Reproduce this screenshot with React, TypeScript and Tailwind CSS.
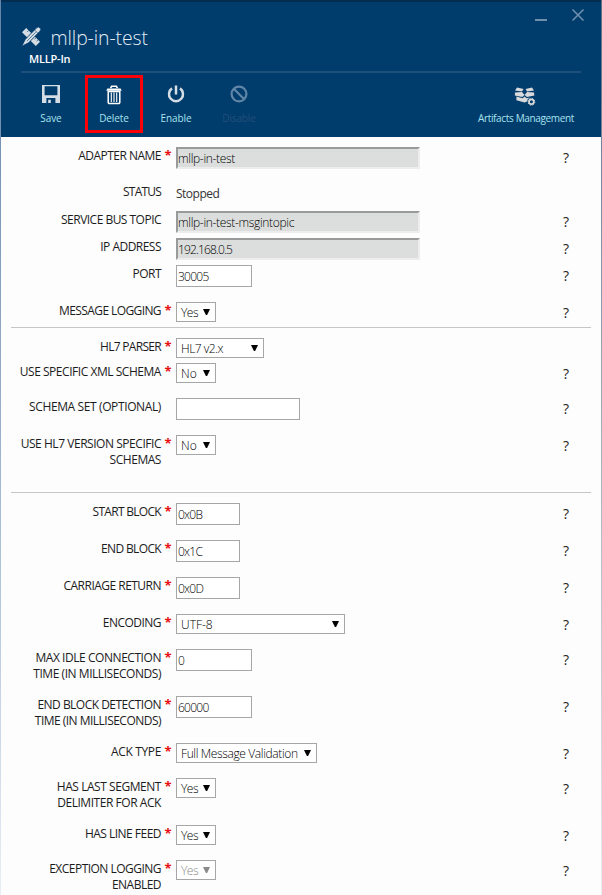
import type { ReactNode } from "react";

type Control =
  | { kind: "readonly"; value: string; tracking?: string }
  | { kind: "static"; value: string }
  | { kind: "input"; value: string; width: string }
  | { kind: "select"; value: string; width: string; tracking?: string; disabled?: boolean };

type Row = {
  label: string[];
  height: string;
  control: Control;
  required?: boolean;
  help?: boolean;
  tracking?: string;
};

const serviceRows: Row[] = [
  { label: ["ADAPTER NAME"], height: "h-9", required: true, help: true, control: { kind: "readonly", value: "mllp-in-test" } },
  { label: ["STATUS"], height: "h-7", tracking: "tracking-[-0.8px]", control: { kind: "static", value: "Stopped" } },
  { label: ["SERVICE BUS TOPIC"], height: "h-[27px]", help: true, control: { kind: "readonly", value: "mllp-in-test-msgintopic" } },
  { label: ["IP ADDRESS"], height: "h-[27px]", help: true, control: { kind: "readonly", value: "192.168.0.5", tracking: "tracking-[-0.85px]" } },
  { label: ["PORT"], height: "h-[37px]", help: true, control: { kind: "input", value: "30005", width: "w-[76px]" } },
  { label: ["MESSAGE LOGGING"], height: "h-[25px]", tracking: "tracking-[-0.6px]", required: true, help: true, control: { kind: "select", value: "Yes", width: "w-10" } },
];

const parserRows: Row[] = [
  { label: ["HL7 PARSER"], height: "h-[25px]", tracking: "tracking-[-0.7px]", required: true, control: { kind: "select", value: "HL7 v2.x", width: "w-[88px]" } },
  { label: ["USE SPECIFIC XML SCHEMA"], height: "h-[35px]", tracking: "tracking-[-0.46px]", required: true, help: true, control: { kind: "select", value: "No", width: "w-10", tracking: "tracking-normal" } },
  { label: ["SCHEMA SET (OPTIONAL)"], height: "h-[37px]", tracking: "tracking-[-0.38px]", help: true, control: { kind: "input", value: "", width: "w-[124px]" } },
  { label: ["USE HL7 VERSION SPECIFIC", "SCHEMAS"], height: "h-[57px]", tracking: "tracking-[-0.46px]", required: true, help: true, control: { kind: "select", value: "No", width: "w-10", tracking: "tracking-normal" } },
];

const protocolRows: Row[] = [
  { label: ["START BLOCK"], height: "h-[37px]", tracking: "tracking-[-0.7px]", required: true, help: true, control: { kind: "input", value: "0x0B", width: "w-16" } },
  { label: ["END BLOCK"], height: "h-[37px]", tracking: "tracking-[-0.65px]", required: true, help: true, control: { kind: "input", value: "0x1C", width: "w-16" } },
  { label: ["CARRIAGE RETURN"], height: "h-[37px]", required: true, help: true, control: { kind: "input", value: "0x0D", width: "w-16" } },
  { label: ["ENCODING"], height: "h-[35px]", required: true, help: true, control: { kind: "select", value: "UTF-8", width: "w-[169px]", tracking: "tracking-normal" } },
  { label: ["MAX IDLE CONNECTION", "TIME (IN MILLISECONDS)"], height: "h-[47px]", tracking: "tracking-[-0.45px]", required: true, help: true, control: { kind: "input", value: "0", width: "w-[76px]" } },
  { label: ["END BLOCK DETECTION", "TIME (IN MILLISECONDS)"], height: "h-[47px]", required: true, help: true, control: { kind: "input", value: "60000", width: "w-[76px]" } },
  { label: ["ACK TYPE"], height: "h-[35px]", tracking: "tracking-[-0.35px]", required: true, help: true, control: { kind: "select", value: "Full Message Validation", width: "w-[141px]", tracking: "tracking-[-0.37px]" } },
  { label: ["HAS LAST SEGMENT", "DELIMITER FOR ACK"], height: "h-[47px]", tracking: "tracking-[-0.45px]", required: true, help: true, control: { kind: "select", value: "Yes", width: "w-10" } },
  { label: ["HAS LINE FEED"], height: "h-[35px]", required: true, help: true, control: { kind: "select", value: "Yes", width: "w-10" } },
  { label: ["EXCEPTION LOGGING", "ENABLED"], height: "h-[35px]", required: true, help: true, control: { kind: "select", value: "Yes", width: "w-10", disabled: true } },
];

function Field({ control }: { control: Control }) {
  if (control.kind === "static") {
    return <div className="h-[22px] text-[12px] leading-[21px] tracking-[-0.5px] text-[#333]">{control.value}</div>;
  }
  if (control.kind === "readonly") {
    return (
      <div className="h-[22px] w-[244px] border-2 border-t-[#999b9a] border-r-[#ededed] border-b-[#ededed] border-l-[#999b9a] bg-[#dcdedd] text-[12px] leading-[20px] font-light text-black">
        <span className={control.tracking ?? "tracking-[-0.33px]"}>{control.value}</span>
      </div>
    );
  }
  if (control.kind === "input") {
    return (
      <div className={`h-[22px] border border-[#a6a6a6] bg-white pl-px text-[12px] leading-[22px] font-light tracking-[-0.75px] text-black ${control.width}`}>
        {control.value}
      </div>
    );
  }
  const tone = control.disabled ? "text-[#8a8a8a]" : "text-black";
  return (
    <div className={`flex h-5 items-center justify-between border border-[#a6a6a6] bg-white pr-[5.5px] pl-1 ${tone} ${control.width}`}>
      <span className={`pt-[2px] text-[12px] leading-[18px] font-light whitespace-nowrap ${control.tracking ?? "tracking-[-0.5px]"}`}>{control.value}</span>
      <svg className="mb-px h-[6px] w-[7px] shrink-0" viewBox="0 0 7 6" fill="currentColor">
        <path d="M0 0h7L4.1 6H2.9z" />
      </svg>
    </div>
  );
}

function FormRow({ row }: { row: Row }) {
  return (
    <div className={`flex items-start ${row.height}`}>
      <div className={`w-[160px] shrink-0 pt-px text-right text-[12px] leading-4 whitespace-nowrap text-[#1c1c1c] ${row.tracking ?? "tracking-[-0.52px]"}`}>
        {row.label.map((line) => (
          <div key={line}>{line}</div>
        ))}
      </div>
      <div className="w-[15px] shrink-0 pl-[3.5px] text-[13px] leading-[17px] font-bold text-[#e81010]">{row.required ? "*" : ""}</div>
      <Field control={row.control} />
      {row.help && <div className="mr-[31px] ml-auto w-2 text-center text-[14px] leading-[21px] text-[#222]">?</div>}
    </div>
  );
}

function Command({ label, width, disabled, tracking, children }: { label: string; width: string; disabled?: boolean; tracking?: string; children: ReactNode }) {
  return (
    <div className={`flex h-[58px] flex-col items-center ${width}`}>
      <div className={`flex h-9 items-center justify-center ${disabled ? "text-[#5f86a6]" : "text-[#d5dde5]"}`}>{children}</div>
      <div className={`text-[10px] leading-[13px] whitespace-nowrap ${tracking ?? "tracking-[-0.1px]"} ${disabled ? "text-[#23507a]" : "font-medium text-[#a9e3ee]"}`}>{label}</div>
    </div>
  );
}

export default function App() {
  return (
    <div className="flex h-[895px] w-[602px] overflow-hidden bg-[#fdfdfd] font-['Open_Sans','Noto_Sans',sans-serif]">
      <div className="w-px shrink-0 bg-linear-to-b from-[#6484a8] via-[#9cb3ce] to-[#e8eef5]" />
      <div className="w-[600px] shrink-0">
        <header className="h-[137px] border-t-2 border-[#022c50] bg-[#003c6c]">
          <div className="flex h-[69px] justify-between">
            <div className="flex pt-[24px] pl-5">
              <svg className="mt-px h-5 w-5" viewBox="0 0 20 20" fill="#d5dce3">
                <path d="M5.2 1L19 14.8 14.8 19 1 5.2z" />
                <path d="M7.6 3.4L6.2 4.8M15 10.8l-1.4 1.4M17 12.8l-1.4 1.4" stroke="#003c6c" strokeWidth=".7" />
                <path d="M15.6 .8a2.2 2.2 0 0 1 3.4 3.4L7.6 15.8 .6 19.4l3.6-7z" stroke="#003c6c" strokeWidth=".9" />
                <path d="M13.8 3.2l3 3M6 14l8.8-8.8" stroke="#003c6c" strokeWidth=".6" fill="none" />
              </svg>
              <div className="pl-[9.5px]">
                <div className="text-[19.4px] leading-[24px] font-light tracking-[-0.08px] text-[#e4edf5]">mllp-in-test</div>
                <div className="-ml-[21.5px] pt-px text-[11px] leading-[16px] font-semibold tracking-[-0.2px] text-white">MLLP-In</div>
              </div>
            </div>
            <div className="flex gap-[25px] pt-[7px] pr-[17px]">
              <div className="mt-[10px] h-0.5 w-3 bg-[#6f90ad]" />
              <svg className="h-3 w-3" viewBox="0 0 12 12" stroke="#7192ae" strokeWidth="1.5">
                <path d="M.5.5l11 11M11.5.5l-11 11" />
              </svg>
            </div>
          </div>
          <div className="mr-5 ml-5 h-0.5 bg-[#1f4f7b]" />
          <div className="flex h-16 items-start pt-[2px] pl-[21px]">
            <div className="flex h-[58px] w-[58px] justify-center pt-px">
              <Command label="Save" width="w-[58px]">
                <svg className="h-[18px] w-[18px]" viewBox="0 0 18 18" fill="currentColor" fillRule="evenodd">
                  <path d="M0 0h18v18H0z M2.6 1.3v9h12.8v-9z M4.4 13V18h1.8v-3.2h2.6V18h4.6v-5z" />
                </svg>
              </Command>
            </div>
            <div className="ml-[5px] h-[58px] w-[58px] border-[3px] border-[#fb0007]">
              <div className="-mt-0.5">
                <Command label="Delete" width="w-[52px]">
                  <svg className="mt-0.5 h-5 w-4" viewBox="0 0 16 20" fill="none" stroke="white">
                    <path d="M4.6 3.2l1-2h4.8l1 2" strokeWidth="1.6" />
                    <path d="M1.4 3.4h13.2l1.2 2.4H.2z" fill="white" stroke="none" />
                    <path d="M2.2 6.5h11.6v11.2l-.8.9H3l-.8-.9z" strokeWidth="1.5" />
                    <path d="M5.3 7.5v9.5M8 7.5v9.5M10.7 7.5v9.5" strokeWidth="1.1" />
                  </svg>
                </Command>
              </div>
            </div>
            <div className="ml-[3px] pt-px">
              <Command label="Enable" width="w-[60px]">
                <svg className="h-[18px] w-[18px]" viewBox="0 0 18 18" fill="none" stroke="currentColor" strokeWidth="2.5">
                  <path d="M9 .5v9M5 3.4a7 7 0 1 0 8 0" />
                </svg>
              </Command>
            </div>
            <div className="ml-[3px] pt-px">
              <Command label="Disable" width="w-[60px]" disabled tracking="tracking-[-0.15px]">
                <svg className="mr-px h-[18px] w-[18px]" viewBox="0 0 18 18" fill="none" stroke="currentColor" strokeWidth="2.2">
                  <circle cx="9" cy="9" r="7.4" />
                  <path d="M3.8 3.8l10.4 10.4" />
                </svg>
              </Command>
            </div>
            <div className="mr-[21px] ml-auto pt-px">
              <Command label="Artifacts Management" width="w-[108px]" tracking="tracking-[-0.35px]">
                <svg className="mt-1 mr-[3px] h-[19px] w-[22px]" viewBox="0 0 22 19" fill="#d8dadc">
                  <path d="M3 .6L9.6 2 8 4.4 1 3.4z M11.6 2L18 .6l2 2.8-7 1z" />
                  <path d="M1 5.4l7-.4 2.6 3-2.4 2L.8 8.4z M20 5.4L13 5l-2.4 3 2.4 2 7.4-1.6z" />
                  <path d="M2.4 9.6l6.2 1.6 2-1.8 2 1.8 3.2-.8a4.8 4.8 0 0 0-2.8 4.2l-2.4 1-8.2-2.4z" />
                  <circle cx="17.4" cy="14.8" r="2.4" fill="none" stroke="#d8dadc" strokeWidth="1.7" />
                  <circle cx="17.4" cy="14.8" r="3.4" fill="none" stroke="#d8dadc" strokeDasharray="1.34 1.33" />
                </svg>
              </Command>
            </div>
          </div>
        </header>
        <main className="pt-[10px]">
          {serviceRows.map((row) => (
            <FormRow key={row.label[0]} row={row} />
          ))}
          <hr className="mr-[10px] mb-[10px] ml-[10px] border-[#c6c6c6]" />
          {parserRows.map((row) => (
            <FormRow key={row.label[0]} row={row} />
          ))}
          <hr className="mr-[10px] mb-[10px] ml-[10px] border-[#c6c6c6]" />
          {protocolRows.map((row) => (
            <FormRow key={row.label[0]} row={row} />
          ))}
        </main>
      </div>
      <div className="w-px shrink-0 bg-linear-to-b from-[#5d7287] via-[#a5b0be] to-[#eceff3]" />
    </div>
  );
}
